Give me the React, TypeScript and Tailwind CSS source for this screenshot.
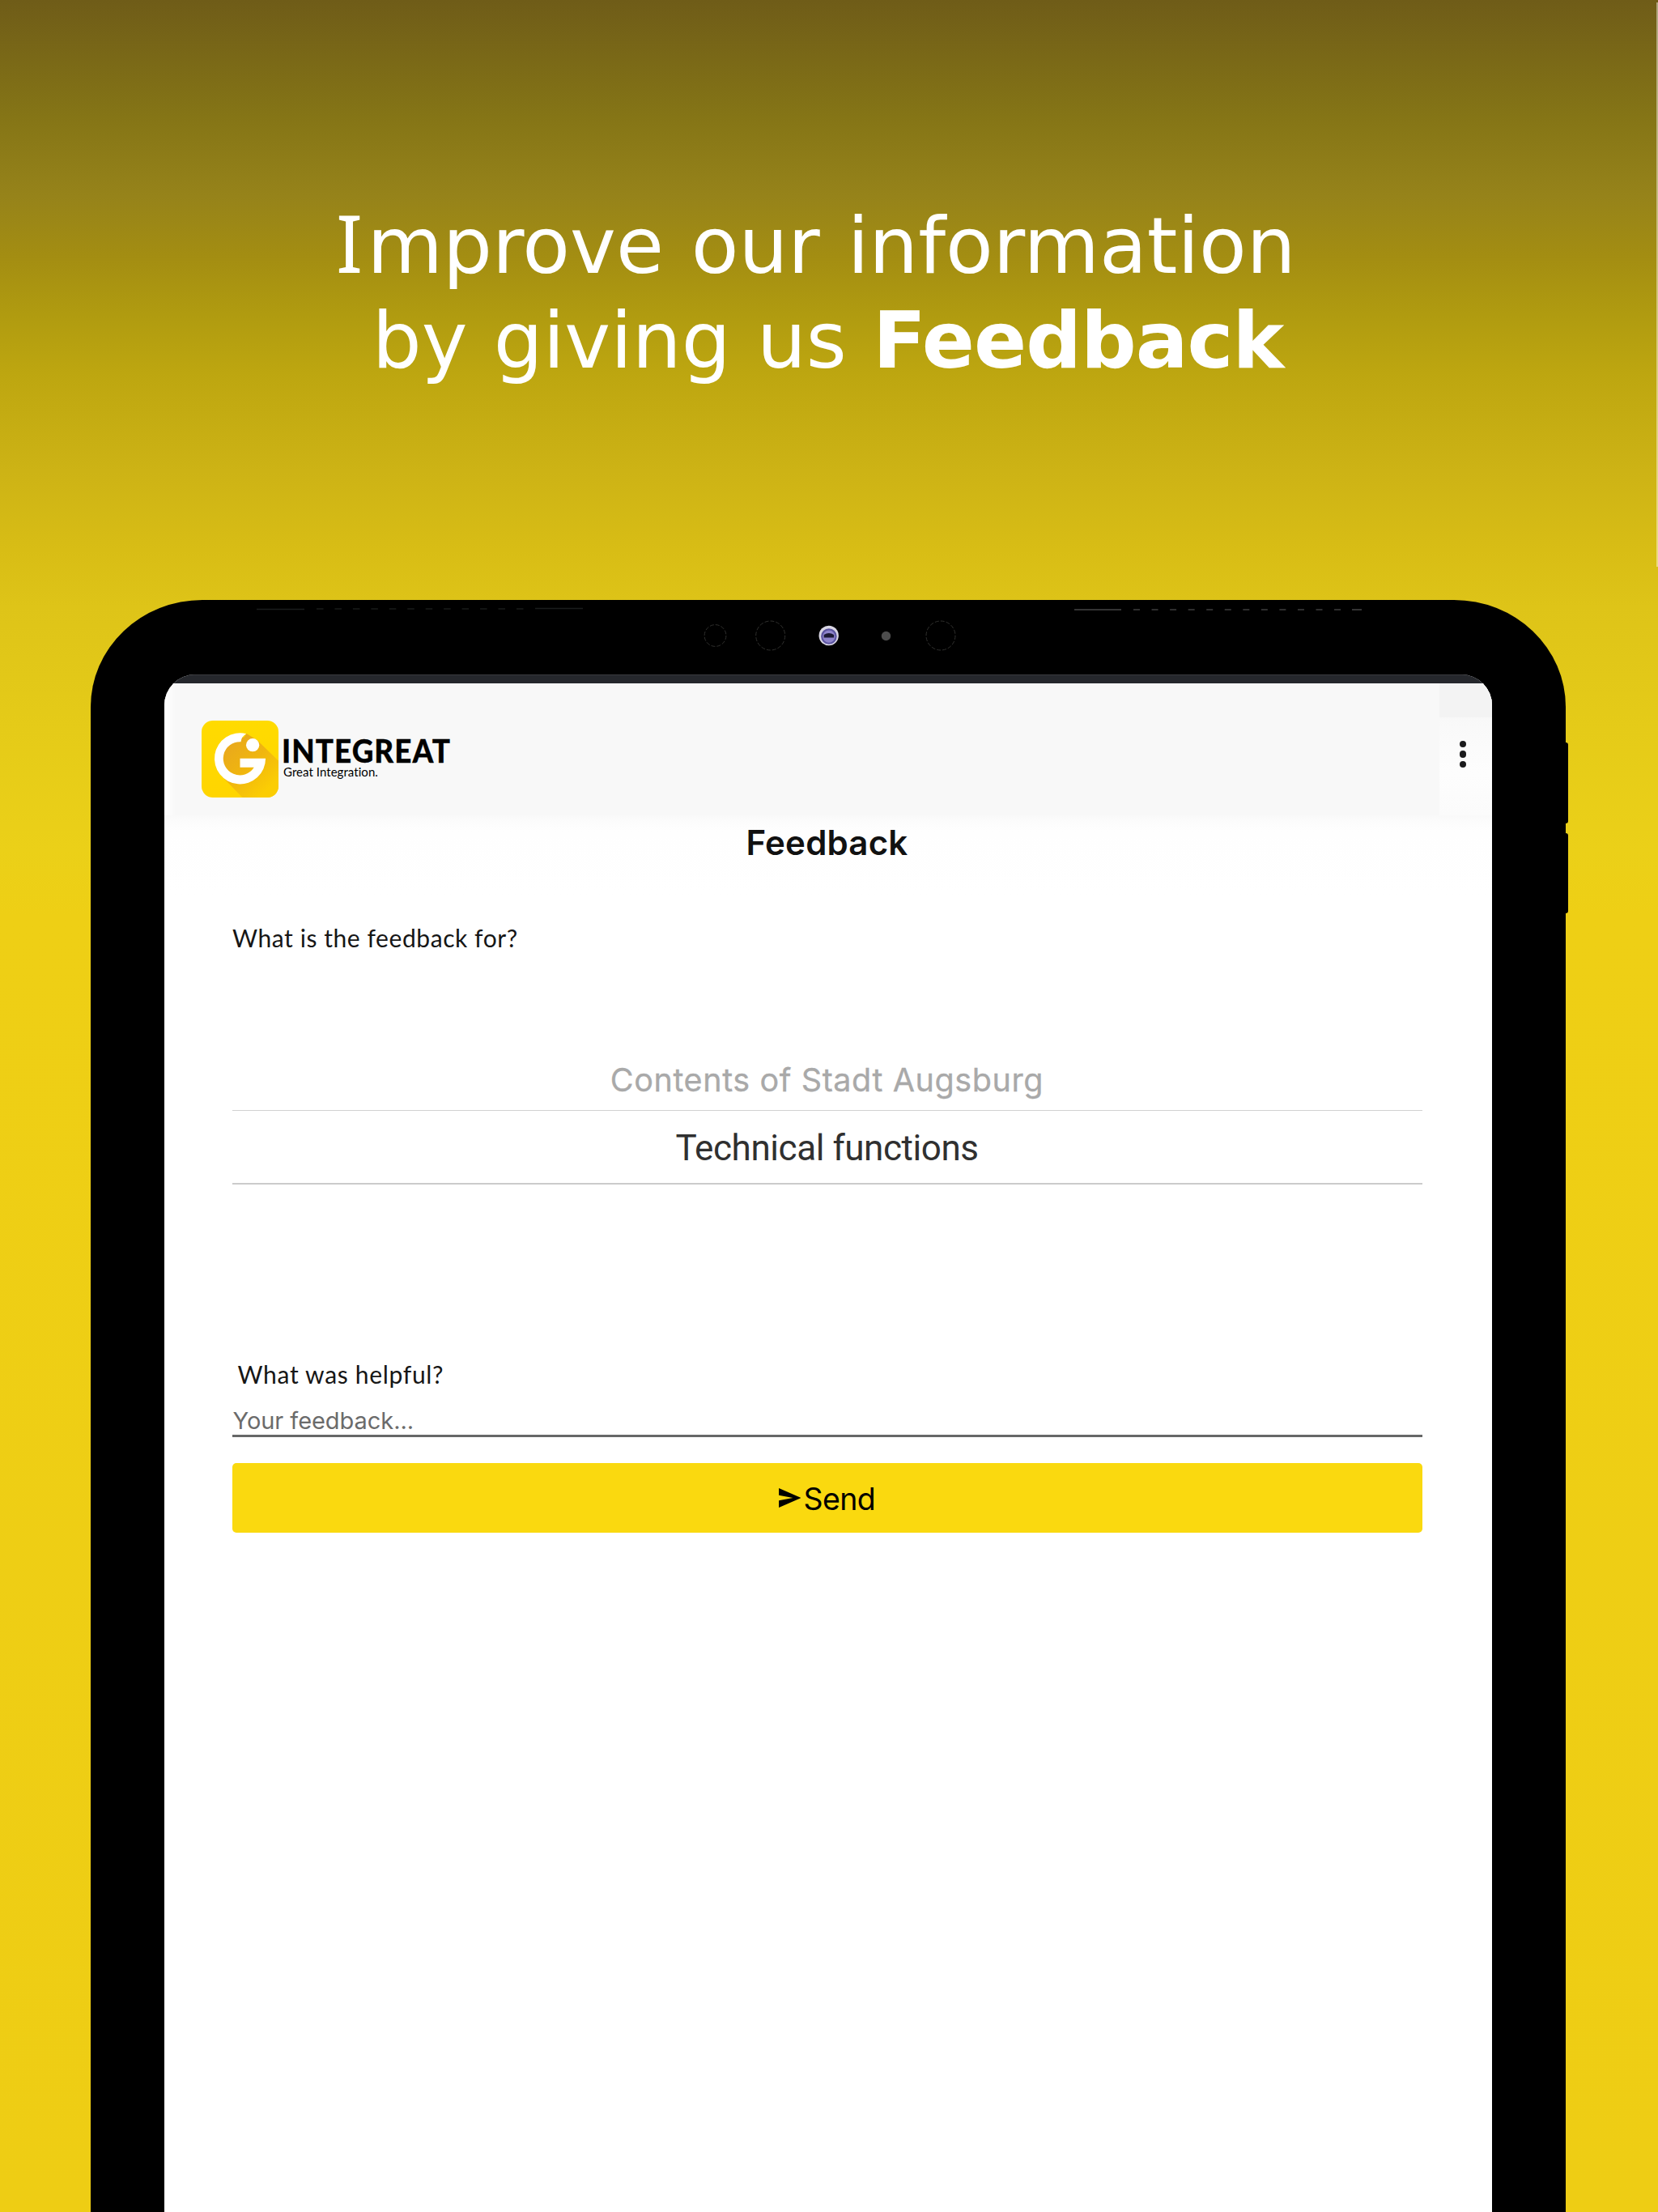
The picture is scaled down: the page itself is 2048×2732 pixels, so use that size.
import type { ReactNode } from 'react';

function Headline() {
  return (
    <h1 className="h-[741px] whitespace-pre pt-[246px] pl-[415px] font-['DejaVu_Sans'] text-[96px] leading-[117px] font-normal text-white">
      <div className="[word-spacing:3.3px]">
        <span className="mr-[5.3px] font-['Noto_Sans'] text-[98px] leading-none">I</span>mprove our information
      </div>
      <div className="pl-[44.7px] [word-spacing:1.8px]">
        by giving us <b className="font-bold tracking-[-0.95px]">Feedback</b>
      </div>
    </h1>
  );
}

function Sensors() {
  const dashes = Array.from({ length: 12 }, (_, i) => i);
  return (
    <svg className="block h-[92px] w-[1822px]" viewBox="112 741 1822 92" fill="none">
      <g stroke="#1a1d1c" strokeWidth="1.4">
        <path d="M317 752.5H376M661 751.5H720" />
        {dashes.map((i) => (
          <path key={i} d={`M${391 + i * 22.45} 752h8.5`} />
        ))}
      </g>
      <g stroke="#343434" strokeWidth="1.8">
        <path d="M1327 753H1385M1670 753h12" />
        {dashes.map((i) => (
          <path key={i} d={`M${1400 + i * 22.55} 753h8`} />
        ))}
      </g>
      <g stroke="#343432" strokeWidth="0.9" strokeDasharray="5 2">
        <circle cx="883.5" cy="785" r="13.4" />
        <circle cx="951.7" cy="785" r="18" />
        <circle cx="1162" cy="785" r="18" />
      </g>
      <circle cx="1023.7" cy="785" r="12.2" fill="#d9d6e4" />
      <circle cx="1023.9" cy="786" r="9.8" fill="#5b54a0" />
      <circle cx="1023.9" cy="786.2" r="7.6" fill="#8e84cb" />
      <path d="M1017.7 787.5v-3.6q6.2-3.6 12.4 0v3.6z" fill="#1c1a35" />
      <circle cx="1094.5" cy="785.5" r="5.7" fill="#4c4c4c" />
    </svg>
  );
}

function LogoMark() {
  return (
    <svg className="mt-[46px] h-[95px] w-[95px] shrink-0" viewBox="0 0 286 286">
      <defs>
        <linearGradient id="tile" x1="0" y1="0" x2="0" y2="1">
          <stop offset="0" stopColor="#ffdb00" />
          <stop offset="1" stopColor="#ffd500" />
        </linearGradient>
        <linearGradient id="shade" gradientUnits="userSpaceOnUse" x1="100" y1="90" x2="250" y2="250">
          <stop offset="0" stopColor="#e9a91c" />
          <stop offset="0.5" stopColor="#f0b60f" />
          <stop offset="1" stopColor="#fbcd04" />
        </linearGradient>
        <clipPath id="tileClip">
          <rect width="286" height="286" rx="42" />
        </clipPath>
      </defs>
      <g clipPath="url(#tileClip)">
        <rect width="286" height="286" fill="url(#tile)" />
        <circle cx="143" cy="141" r="80" fill="url(#shade)" />
        <path d="M167 48L207 73 286 150V286H152L76 208 146 79Z" fill="url(#shade)" />
      </g>
      <path
        d="M166 49A95 95 0 1 0 238 141H143V174H195A62 62 0 1 1 146 79Q148 60 166 49Z"
        fill="#fff"
      />
      <circle cx="190" cy="91" r="24.5" fill="#fff" />
    </svg>
  );
}

function AppHeader() {
  return (
    <header className="flex h-[163px] bg-[linear-gradient(90deg,#fff_0,#f8f8f8_14px,#f8f8f8_100%)]">
      <div className="flex flex-1 pl-[46px]">
        <LogoMark />
        <div className="pt-[66px] pl-[4px] font-['Lato'] text-black">
          <div className="w-[230px] origin-left scale-x-[0.92] text-[40px] leading-[34px] font-black tracking-[1.15px] [-webkit-text-stroke:0.3px_black]">
            INTEGREAT
          </div>
          <div className="mt-[3px] pl-[2.5px] text-[15px] leading-[13px] font-normal tracking-[0.05px]">
            Great Integration.
          </div>
        </div>
      </div>
      <div className="flex h-full w-[65px] flex-col bg-[linear-gradient(180deg,#f3f3f3_0,#f3f3f3_42px,#f8f8f8_42px,#fbfbfb_80px,#fdfdfd_110px,#fbfbfb_100%)]">
        <div className="mt-[71px] ml-[24.6px] flex flex-col gap-[4px]">
          <i className="size-[8.4px] rounded-full bg-[#1b1b1d]" />
          <i className="size-[8.4px] rounded-full bg-[#1b1b1d]" />
          <i className="size-[8.4px] rounded-full bg-[#1b1b1d]" />
        </div>
      </div>
    </header>
  );
}

function Question({ children, className }: { children: ReactNode; className: string }) {
  return <div className={`font-['Lato'] text-[30px] leading-[36px] text-[#161616] ${className}`}>{children}</div>;
}

function FeedbackForm() {
  return (
    <main className="flex-1 bg-[linear-gradient(180deg,#f9f9f9_0,#fcfcfc_8px,#fefefe_20px,#fff_100px)] pt-[8px] pr-[86.5px] pl-[84px]">
      <h2 className="text-center font-['Inter'] text-[42px] leading-[52px] font-semibold tracking-[0.2px] text-[#111]">
        Feedback
      </h2>
      <Question className="mt-[73px] pl-[0.5px] tracking-[0.57px]">What is the feedback for?</Question>
      <div className="mt-[135px] text-center">
        <div className="border-b border-[#d2d2d2] pb-[14px] font-['Inter'] text-[39.5px] leading-[46px] tracking-[0.6px] text-[#a9a9a9] [-webkit-text-stroke:0.3px_#a9a9a9]">
          Contents of Stadt Augsburg
        </div>
        <div className="border-b-2 border-[#cbcbcb] pt-[20px] pb-[17px] font-['Roboto'] text-[44px] leading-[52px] tracking-[-0.43px] text-[#303030]">
          Technical functions
        </div>
      </div>
      <Question className="mt-[216px] pl-[7px] tracking-[0.68px]">What was helpful?</Question>
      <div className="mt-[22px] border-b-[3px] border-[#666767] pl-[1px] font-['Inter'] text-[29px] leading-[35px] tracking-[-0.05px] text-[#6b6b6b]">
        Your feedback...
      </div>
      <button className="mt-[32px] flex h-[86px] w-full items-start justify-center rounded-[5px] bg-[#fad90f] pt-[22px] text-black">
        <svg className="mt-[8.5px] mr-[3.3px] h-[24px] w-[27.5px]" viewBox="0 0 82 72" fill="currentColor">
          <path d="M0 0L82 36 0 72V46L52 36 0 26Z" />
        </svg>
        <span className="font-['Inter'] text-[37.5px] leading-[46px] tracking-[-0.6px]">Send</span>
      </button>
    </main>
  );
}

function Tablet() {
  return (
    <div className="relative ml-[111.5px] flex h-[1991px] w-[1822.5px] flex-col rounded-t-[138px_132px] bg-black">
      <div className="absolute top-[176px] -right-[3px] h-[100px] w-[8px] rounded-[3px] bg-black" />
      <div className="absolute top-[288px] -right-[3px] h-[99px] w-[8px] rounded-[3px] bg-black" />
      <Sensors />
      <div className="ml-[91px] flex w-[1640.5px] flex-1 flex-col overflow-hidden rounded-t-[38px] bg-white">
        <div className="h-[11px] shrink-0 border-t border-[#3a3a3e] bg-[#25272c]" />
        <AppHeader />
        <FeedbackForm />
      </div>
    </div>
  );
}

export default function App() {
  return (
    <div className="relative h-[2732px] w-[2048px] overflow-hidden bg-[linear-gradient(180deg,#6f5c18_0,#857516_145px,#96831a_242px,#a38d12_315px,#b09b10_388px,#bda610_460px,#cdb315_582px,#d8bd15_679px,#dec418_750px,#e5cb18_900px,#ebd018_1050px,#eecf15_1130px,#eecd14_100%)]">
      <Headline />
      <Tablet />
      <div className="absolute top-[3px] right-0 h-[697px] w-[2.5px] bg-white/45" />
    </div>
  );
}
